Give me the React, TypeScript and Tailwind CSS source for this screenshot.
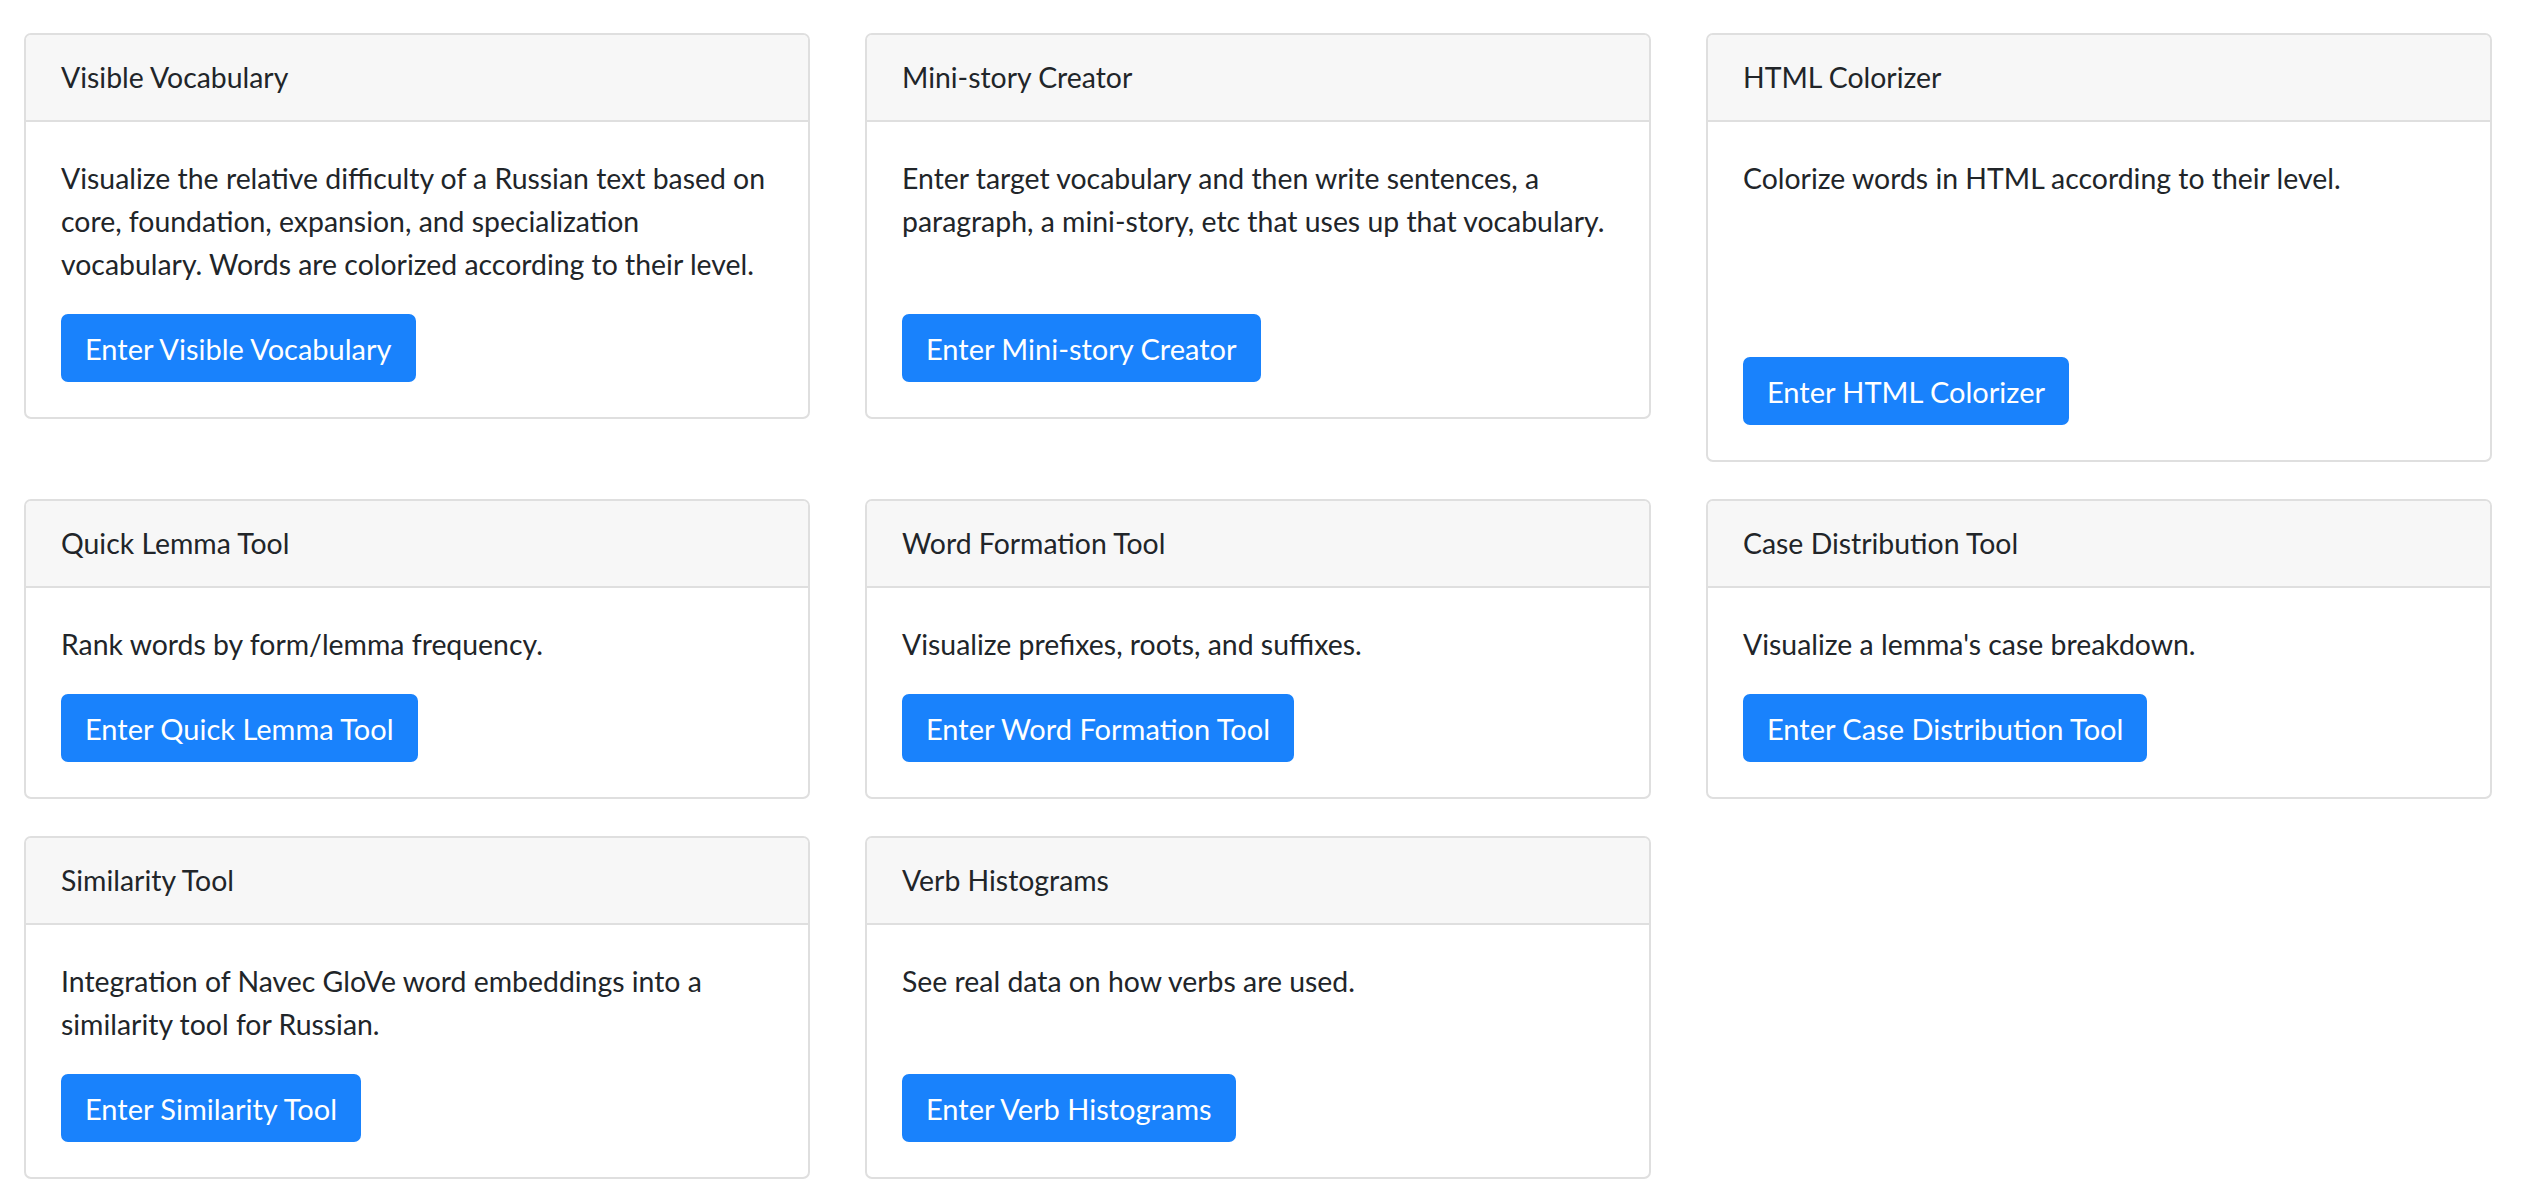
import React from 'react';

const tools = [
  {
    title: 'Visible Vocabulary',
    text: 'Visualize the relative difficulty of a Russian text based on core, foundation, expansion, and specialization vocabulary. Words are colorized according to their level.',
    minH: 'min-h-[129px]',
  },
  {
    title: 'Mini-story Creator',
    text: 'Enter target vocabulary and then write sentences, a paragraph, a mini-story, etc that uses up that vocabulary.',
    minH: 'min-h-[129px]',
  },
  {
    title: 'HTML Colorizer',
    text: 'Colorize words in HTML according to their level.',
    minH: 'min-h-[172px]',
  },
  {
    title: 'Quick Lemma Tool',
    text: 'Rank words by form/lemma frequency.',
    minH: 'min-h-[43px]',
  },
  {
    title: 'Word Formation Tool',
    text: 'Visualize prefixes, roots, and suffixes.',
    minH: 'min-h-[43px]',
  },
  {
    title: 'Case Distribution Tool',
    text: "Visualize a lemma's case breakdown.",
    minH: 'min-h-[43px]',
  },
  {
    title: 'Similarity Tool',
    text: 'Integration of Navec GloVe word embeddings into a similarity tool for Russian.',
    minH: 'min-h-[86px]',
  },
  {
    title: 'Verb Histograms',
    text: 'See real data on how verbs are used.',
    minH: 'min-h-[86px]',
  },
];

const ToolCard = ({ title, text, minH }: { title: string; text: string; minH: string }) => (
  <div className="rounded-[7px] border-2 border-[#dfdfdf] bg-white overflow-hidden">
    <div className="bg-[#f7f7f7] border-b-2 border-[#dfdfdf] px-[35px] py-[21px] leading-[43px]">
      {title}
    </div>
    <div className="p-[35px]">
      <p className={`mb-[28px] leading-[43px] ${minH}`}>{text}</p>
      <button className="rounded-[7px] border-2 border-[#1982fc] bg-[#1982fc] px-[22px] py-[10.5px] text-[29px] leading-[43px] text-white">
        Enter {title}
      </button>
    </div>
  </div>
);

export default function App() {
  return (
    <div
      className="min-h-screen bg-white pl-[24px] pr-[30px] pt-[33px] text-[28.4px] text-[#212529]"
      style={{ fontFamily: 'Lato, "Open Sans", sans-serif' }}
    >
      <div className="grid grid-cols-3 items-start gap-x-[55px] gap-y-[37px]">
        {tools.map((t) => (
          <ToolCard key={t.title} {...t} />
        ))}
      </div>
    </div>
  );
}
